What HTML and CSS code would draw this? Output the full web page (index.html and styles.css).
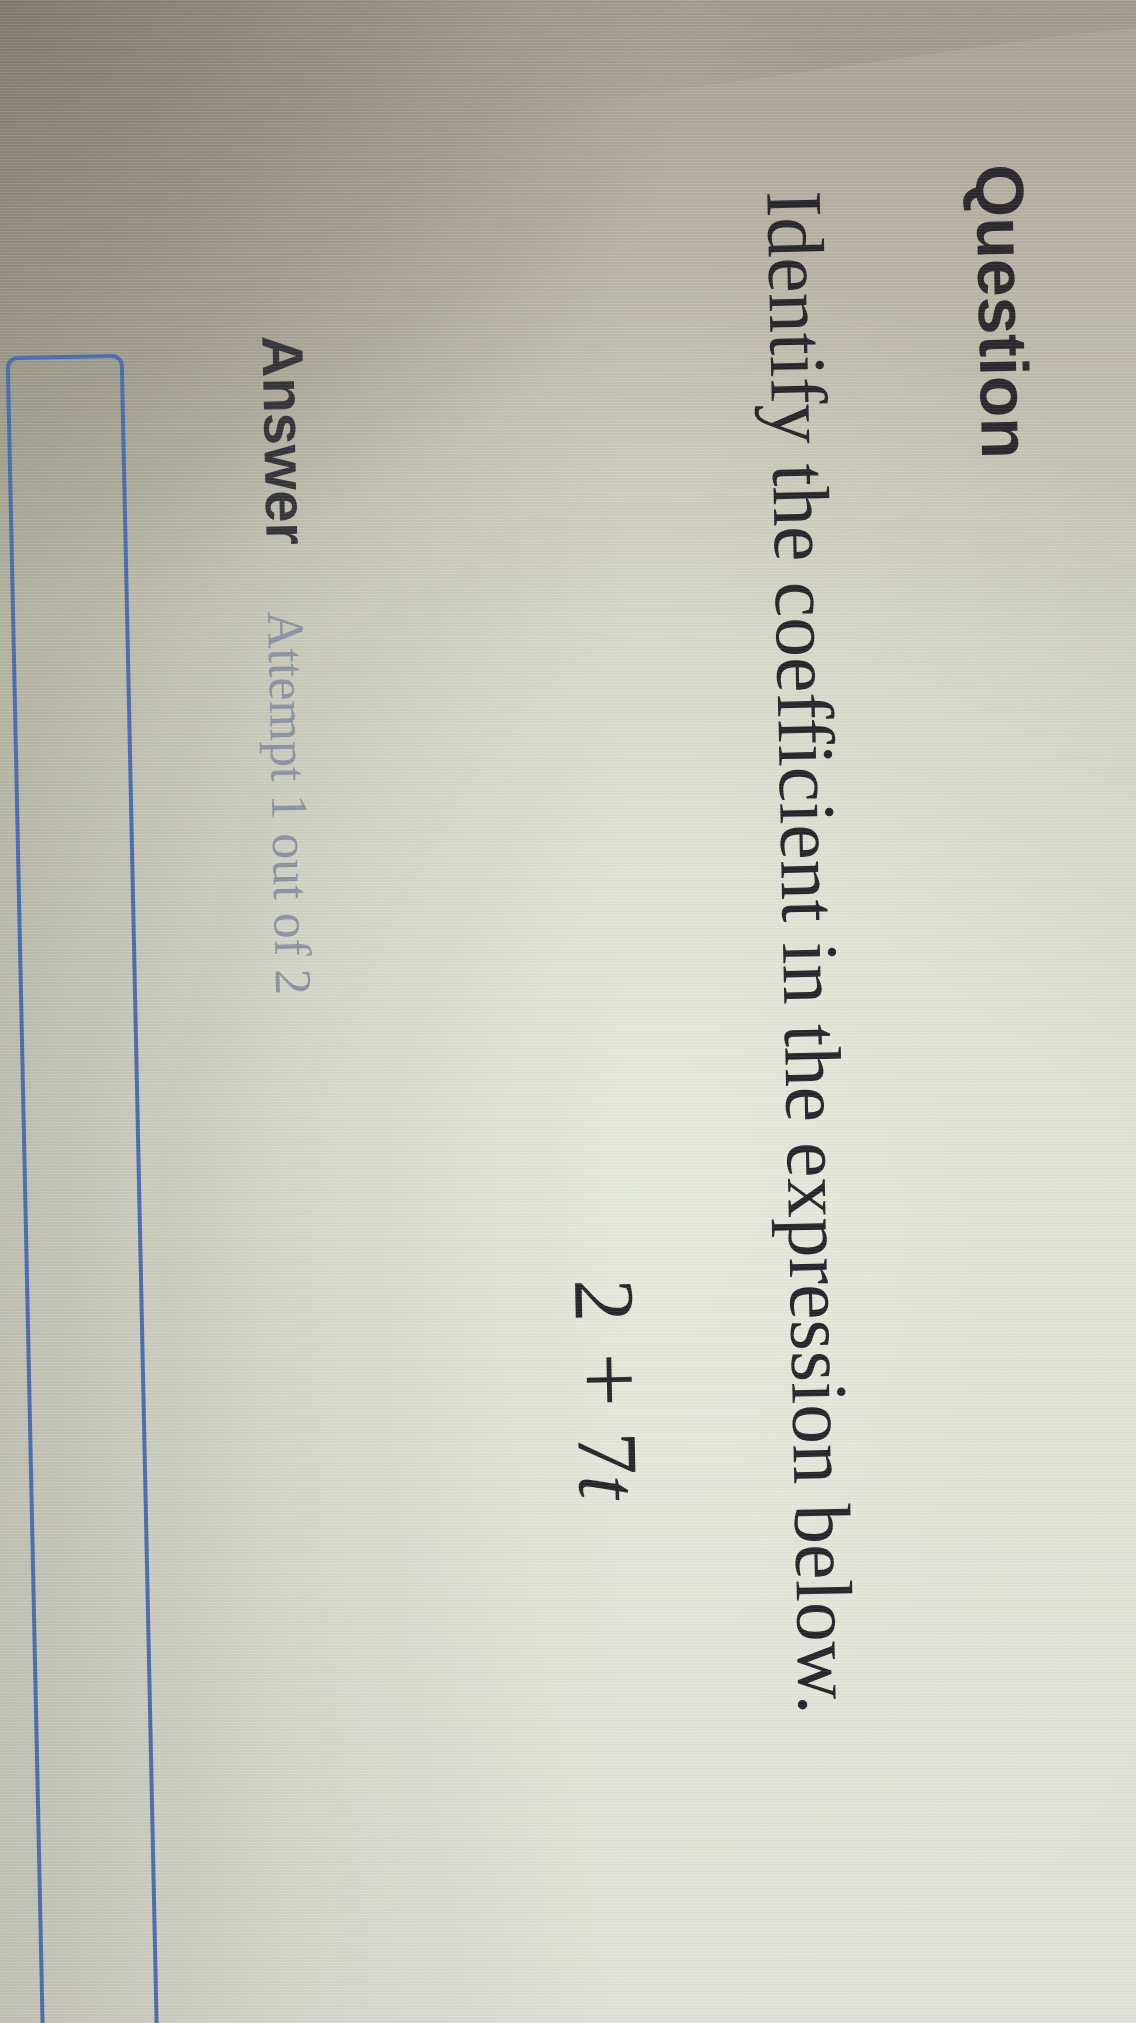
FILE: index.html
```html
<!DOCTYPE html>
<html lang="en">
<head>
<meta charset="utf-8">
<title>Question</title>
<link rel="stylesheet" href="styles.css">
</head>
<body>
<div class="photo">
  <div class="bezel"></div>
  <div class="stage">
    <div class="sheet">
      <h2 class="q-title">Question</h2>
      <p class="prompt">Identify the coefficient in the expression below.</p>
      <div class="math"><span class="mn">2</span><span class="mo">+</span><span class="mn">7</span><span class="mi">t</span></div>
      <div class="answer-row">
        <span class="answer-label">Answer</span>
        <span class="attempt">Attempt 1 out of 2</span>
      </div>
      <div class="answer-box"></div>
    </div>
  </div>
  <div class="moire"></div>
</div>
</body>
</html>
```
FILE: styles.css
```css
html, body {
  margin: 0;
  padding: 0;
}
body {
  width: 1136px;
  height: 2023px;
  overflow: hidden;
  background: #d6d8c9;
}
.photo {
  position: relative;
  width: 1136px;
  height: 2023px;
  overflow: hidden;
  background:
    radial-gradient(ellipse 700px 600px at 0px 0px, rgba(110, 104, 90, 0.55), rgba(110, 104, 90, 0) 100%),
    linear-gradient(to right, rgba(120, 116, 96, 0.30) 0%, rgba(120, 116, 96, 0.12) 25%, rgba(120, 116, 96, 0) 55%),
    radial-gradient(ellipse 700px 900px at 650px 1150px, rgba(236, 240, 228, 0.75), rgba(236, 240, 228, 0) 100%),
    linear-gradient(to bottom, #a9a296 0%, #b9b4a6 12%, #d0d1c1 32%, #dde0d2 55%, #e1e3d9 80%, #e2e3da 100%);
}
.bezel {
  position: absolute;
  top: 0;
  left: 0;
  width: 1136px;
  height: 120px;
  background: linear-gradient(to right, rgba(140, 134, 126, 0) 0px, rgba(140, 134, 126, 0) 560px, rgba(140, 134, 126, 0.26) 820px, rgba(150, 146, 140, 0.34) 1136px);
  clip-path: polygon(560px 0, 1136px 0, 1136px 28px, 1060px 36px, 960px 50px, 860px 64px, 760px 78px, 660px 92px, 560px 104px);
  filter: blur(1px);
}
.moire {
  position: absolute;
  inset: 0;
  pointer-events: none;
  background: repeating-linear-gradient(to bottom, rgba(255, 255, 255, 0.07) 0px, rgba(255, 255, 255, 0.07) 1px, rgba(60, 60, 40, 0.035) 1px, rgba(60, 60, 40, 0.035) 3px);
}
.stage {
  position: absolute;
  left: -443.5px;
  top: 443.5px;
  width: 2023px;
  height: 1136px;
  transform: rotate(88.8deg);
  transform-origin: center center;
}
.sheet {
  display: flex;
  flex-direction: column;
  align-items: flex-start;
  padding-top: 85px;
}
.q-title {
  margin: 0 0 0 173px;
  font-family: "Liberation Sans", Arial, sans-serif;
  font-weight: bold;
  font-size: 68px;
  line-height: 68px;
  color: #29262d;
}
.prompt {
  margin: 132px 0 0 195px;
  font-family: "Liberation Serif", "Times New Roman", serif;
  font-size: 80px;
  line-height: 80px;
  color: #25242a;
  white-space: nowrap;
}
.math {
  margin: 130px 0 0 1279px;
  font-family: "Liberation Serif", "Times New Roman", serif;
  font-size: 86px;
  line-height: 86px;
  color: #26252b;
  white-space: nowrap;
}
.mo {
  font-size: 1.12em;
  line-height: 0;
  margin: 0 0.26em 0 0.32em;
}
.mi {
  font-style: italic;
}
.answer-row {
  margin: 230px 0 0 329px;
  display: flex;
  align-items: baseline;
  gap: 66px;
}
.answer-label {
  font-family: "Liberation Sans", Arial, sans-serif;
  font-weight: bold;
  font-size: 58px;
  line-height: 58px;
  color: #34333a;
}
.attempt {
  font-family: "Liberation Serif", "Times New Roman", serif;
  font-size: 52px;
  line-height: 52px;
  color: #8c93a4;
}
.answer-box {
  margin: 130px 0 0 344px;
  width: 2000px;
  height: 110px;
  border: 4px solid #4b6caf;
  border-radius: 12px;
}
```
